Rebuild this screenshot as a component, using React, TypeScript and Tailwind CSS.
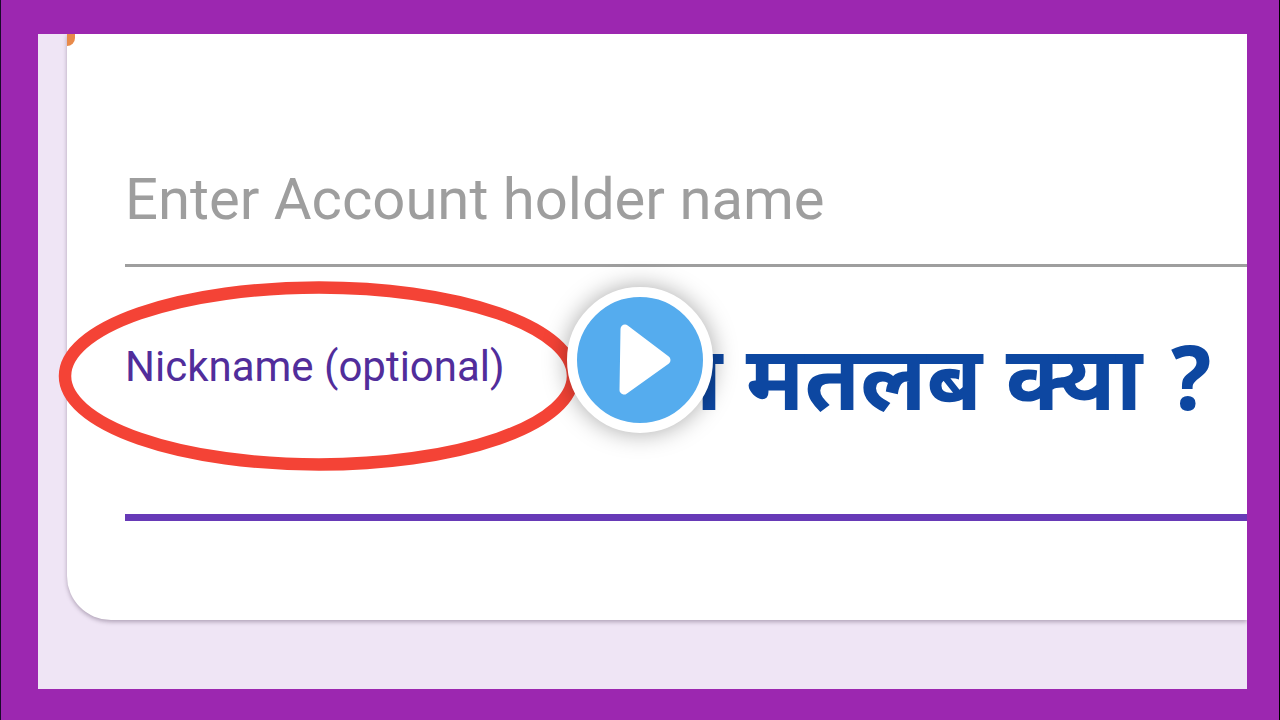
import { useState } from "react";

export default function App() {
  const [holder, setHolder] = useState("");
  const [nickname, setNickname] = useState("");

  return (
    <main className="relative flex min-h-screen flex-col overflow-hidden border-l border-r border-l-[#1b0a2b] border-r-black bg-[#9c27b0] pt-[34px] pr-8 pb-[31px] pl-[37px] font-['Roboto',sans-serif]">
      <div className="flex grow flex-col overflow-hidden bg-[#efe5f5] pb-[69px] pl-[29px]">
        <form
          className="relative flex grow flex-col rounded-bl-[44px] bg-white pl-[58px] shadow-[0_2px_4px_rgba(60,40,70,0.35)]"
          onSubmit={(e) => e.preventDefault()}
        >
          <span
            className="absolute top-0 left-0 h-3 w-2 rounded-br-lg bg-[#e88a4a]"
            aria-hidden
          />

          <input
            type="text"
            aria-label="Enter Account holder name"
            placeholder="Enter Account holder name"
            className="mt-24 h-[137px] w-full border-b-3 border-[#9e9e9e] pt-1 text-[58px] text-[#616161] outline-none placeholder:text-[#9e9e9e]"
            value={holder}
            onChange={(e) => setHolder(e.target.value)}
          />

          <div className="flex h-[198px] items-center justify-between pr-8">
            <div className="relative">
              <label
                htmlFor="nickname"
                className="text-[42px] whitespace-nowrap text-[#512d9b]"
              >
                Nickname (optional)
              </label>
              <Highlight />
            </div>
            <p className="mb-8 self-end text-[90px] leading-none font-bold whitespace-nowrap text-[#0d47a1] font-['Noto_Sans_Devanagari','Noto_Sans',sans-serif]">
              का मतलब क्या ?
            </p>
          </div>

          <input
            id="nickname"
            type="text"
            className="h-14 w-full border-b-7 border-[#673ab7] text-[42px] text-[#424242] outline-none"
            value={nickname}
            onChange={(e) => setNickname(e.target.value)}
          />
        </form>
      </div>

      <PlayButton />
    </main>
  );
}

// red ring drawn around the nickname label
function Highlight() {
  return (
    <svg
      className="pointer-events-none absolute top-1/2 left-1/2 h-[212px] w-[532px] max-w-none -translate-x-1/2 -translate-y-1/2"
      viewBox="0 0 532 212"
      fill="none"
      aria-hidden
    >
      <ellipse cx="270" cy="116" rx="254" ry="88.5" stroke="#f44336" strokeWidth="12.5" />
    </svg>
  );
}

function PlayButton() {
  return (
    <button
      type="button"
      aria-label="Play"
      className="absolute top-1/2 left-1/2 flex size-[146px] -translate-x-1/2 -translate-y-1/2 items-center justify-center rounded-full border-10 border-white bg-[#55acee] shadow-[0_0_24px_rgba(0,0,0,0.35)]"
    >
      <svg className="size-[126px]" viewBox="0 0 126 126" aria-hidden>
        <path
          d="M48 32L89 63L47 93Z"
          fill="#fff"
          stroke="#fff"
          strokeWidth="9"
          strokeLinejoin="round"
        />
      </svg>
    </button>
  );
}
